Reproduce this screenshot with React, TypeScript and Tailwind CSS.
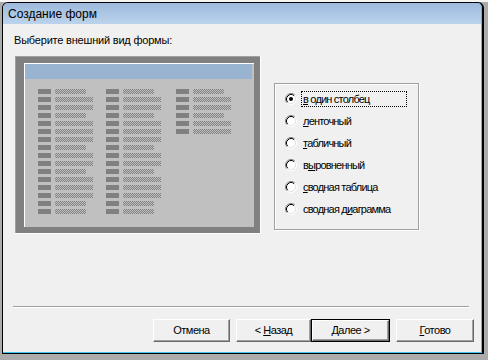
const COL_AB = [0, 1, 1, 0, 1, 1, 1, 0, 1, 1, 0, 1, 1, 1, 0, 0]
const COL_C = [0, 1, 1, 0, 1, 1]

const options: [string, string, string][] = [
  ["", "в", " один столбец"],
  ["", "л", "енточный"],
  ["", "т", "абличный"],
  ["в", "ы", "ровненный"],
  ["", "с", "водная таблица"],
  ["сводная д", "и", "аграмма"],
]

function FieldColumn({ rows, className }: { rows: number[]; className: string }) {
  return (
    <div className={`flex flex-col gap-[3px] ${className}`}>
      {rows.map((long, i) => (
        <div key={i} className="flex h-[5px] items-center gap-[4px]">
          <div className="h-[5px] w-[13px] bg-[#808080]" />
          <div
            className={`h-[5px] bg-[image:repeating-conic-gradient(#808080_0%_25%,#c0c0c0_0%_50%)] bg-[length:2px_2px] ${
              long ? "w-[38px]" : "w-[31px]"
            }`}
          />
        </div>
      ))}
    </div>
  )
}

function Radio({ checked }: { checked?: boolean }) {
  return (
    <svg width="12" height="12" viewBox="0 0 12 12" className="shrink-0">
      <circle cx="6" cy="6" r="4.5" fill="#fff" />
      <path d="M2.11 9.89 A5.5 5.5 0 0 1 9.89 2.11" fill="none" stroke="#808080" />
      <path d="M2.82 9.18 A4.5 4.5 0 0 1 9.18 2.82" fill="none" stroke="#000" />
      <path d="M9.89 2.11 A5.5 5.5 0 0 1 2.11 9.89" fill="none" stroke="#fff" />
      <path d="M9.18 2.82 A4.5 4.5 0 0 1 2.82 9.18" fill="none" stroke="#e3e3e3" />
      {checked && <circle cx="6" cy="6" r="2" fill="#000" />}
    </svg>
  )
}

function Button({ pre = "", u = "", post = "", w, isDefault }: { pre?: string; u?: string; post?: string; w: string; isDefault?: boolean }) {
  return (
    <div className={`h-[23px] ${w} ${isDefault ? "border border-black" : ""}`}>
      <div className="flex h-full w-full items-center justify-center border-t border-l border-white border-r border-b border-r-[#696969] border-b-[#696969] bg-[#f0f0f0] tracking-[-0.5px] shadow-[inset_-1px_-1px_0_#a0a0a0]">
        <span>
          {pre}
          {u && <span className="underline underline-offset-[1px]">{u}</span>}
          {post}
        </span>
      </div>
    </div>
  )
}

export default function App() {
  return (
    <div className="h-[360px] w-[488px] overflow-hidden border-t-2 border-[#f4f4f4] bg-[#ababab] font-['Liberation_Sans',Arial,sans-serif] text-[11px] text-black">
      <div className="ml-[2px] h-[352px] w-[482px] rounded-t-[6px] border-t border-l border-r-2 border-b border-black">
        <div className="flex h-full w-full flex-col overflow-hidden rounded-t-[5px] border-r border-b border-[#3fc6ef]">
          <div className="flex h-[21px] shrink-0 items-center bg-linear-to-b from-[#9db9dc] to-[#bcd3ec] pl-[5px] text-[12px]">
            Создание форм
          </div>
          <div className="flex flex-1 flex-col bg-[#f0f0f0]">
            <div className="pl-[11px] pt-[10px] leading-[13px] tracking-[-0.2px]">Выберите внешний вид формы:</div>
            <div className="mt-[9px] flex pl-[12px]">
              <div className="border-r border-b border-white">
                <div className="h-[177px] w-[245px] bg-[#808080] pl-[9px] pt-[7px] pr-[6px] pb-[6px] shadow-[inset_1px_1px_0_#a0a0a0]">
                  <div className="h-full w-full border-t border-l border-white bg-[#c0c0c0] pr-[2px]">
                    <div className="h-[15px] bg-[#99b4d1]" />
                    <div className="flex pl-[13px] pt-[10px]">
                      <FieldColumn rows={COL_AB} className="w-[68px]" />
                      <FieldColumn rows={COL_AB} className="w-[70px]" />
                      <FieldColumn rows={COL_C} className="flex-1" />
                    </div>
                  </div>
                </div>
              </div>
              <div className="ml-[13px] mt-[27px] h-[147px] w-[145px] border border-[#a0a0a0] shadow-[inset_1px_1px_0_#fff,1px_1px_0_#fff]">
                <div className="flex flex-col pl-[10px] pt-[4px]">
                  {options.map(([pre, u, post], i) => (
                    <div key={i} className="flex h-[22px] items-center gap-[4px]">
                      <Radio checked={i === 0} />
                      <div
                        className={`flex h-[16px] w-[106px] items-center px-[1px] tracking-[-0.8px] ${
                          i === 0 ? "border border-dotted border-black" : "border border-transparent"
                        }`}
                      >
                        <span className="whitespace-nowrap">
                          {pre}
                          <span className="underline underline-offset-[1px]">{u}</span>
                          {post}
                        </span>
                      </div>
                    </div>
                  ))}
                </div>
              </div>
            </div>
            <div className="mt-auto">
              <div className="ml-[10px] mr-[12px] h-[2px] border-t border-[#a0a0a0] border-b border-b-white" />
              <div className="mt-[11px] flex justify-end gap-[6px] pr-[7px] pb-[10px]">
                <Button post="Отмена" w="w-[77px]" />
                <div className="flex">
                  <Button pre="< " u="Н" post="азад" w="w-[75px]" />
                  <Button u="Д" post="алее >" w="w-[79px]" isDefault />
                </div>
                <Button u="Г" post="отово" w="w-[78px]" />
              </div>
            </div>
          </div>
        </div>
      </div>
    </div>
  )
}
